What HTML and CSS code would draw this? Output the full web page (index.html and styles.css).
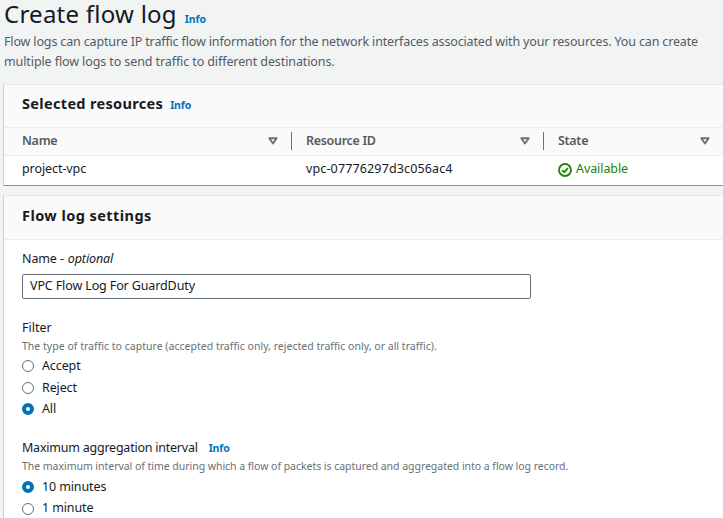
FILE: index.html
```html
<!DOCTYPE html>
<html lang="en">
<head>
<meta charset="utf-8">
<title>Create flow log</title>
<link rel="stylesheet" href="styles.css">
</head>
<body>
<header class="page-header">
  <div class="title-row"><h1>Create flow log</h1><a class="info">Info</a></div>
  <p><span class="intro-first">Flow logs can capture IP traffic flow information for the network interfaces associated with your resources. You can create</span><br><span class="intro-second">multiple flow logs to send traffic to different destinations.</span></p>
</header>
<section class="panel resources">
  <div class="panel-header"><h2>Selected resources</h2><a class="info">Info</a></div>
  <div class="row head">
    <div class="cell"><span>Name</span><svg class="sort" viewBox="0 0 10 8"><path d="M1.3 1.2h7.4L5 6.5z"/></svg></div>
    <div class="cell"><span class="id-head">Resource ID</span><svg class="sort" viewBox="0 0 10 8"><path d="M1.3 1.2h7.4L5 6.5z"/></svg></div>
    <div class="cell"><span>State</span><svg class="sort" viewBox="0 0 10 8"><path d="M1.3 1.2h7.4L5 6.5z"/></svg></div>
  </div>
  <div class="row data">
    <div class="cell"><span class="vpc-name">project-vpc</span></div>
    <div class="cell"><span class="vpc-id">vpc-07776297d3c056ac4</span></div>
    <div class="cell available"><svg class="check" viewBox="0 0 14 14"><circle cx="7" cy="7" r="6"/><path d="M4 7.2l2.2 2L10 5.2"/></svg><span>Available</span></div>
  </div>
</section>
<section class="panel settings">
  <div class="panel-header"><h2 class="settings-title">Flow log settings</h2></div>
  <form class="form">
    <label class="label name-label" for="name">Name - <em>optional</em></label>
    <input id="name" type="text" value="VPC Flow Log For GuardDuty">
    <div class="group filter">
      <div class="label"><span>Filter</span></div>
      <div class="hint filter-hint">The type of traffic to capture (accepted traffic only, rejected traffic only, or all traffic).</div>
      <label class="option"><i class="radio"></i><span>Accept</span></label>
      <label class="option"><i class="radio"></i><span>Reject</span></label>
      <label class="option"><i class="radio on"></i><span>All</span></label>
    </div>
    <div class="group interval">
      <div class="label"><span class="interval-label">Maximum aggregation interval</span><a class="info">Info</a></div>
      <div class="hint interval-hint">The maximum interval of time during which a flow of packets is captured and aggregated into a flow log record.</div>
      <label class="option"><i class="radio on"></i><span class="ten">10 minutes</span></label>
      <label class="option"><i class="radio"></i><span class="ten">1 minute</span></label>
    </div>
  </form>
</section>
</body>
</html>
```
FILE: styles.css
```css
* { box-sizing: border-box; }
body {
  margin: 0;
  height: 518px;
  overflow: hidden;
  background: #f2f3f3;
  color: #16191f;
  font: 12.5px/20px "Noto Sans", sans-serif;
  white-space: nowrap;
}
h1, h2, p { margin: 0; }
.page-header { height: 84px; padding-left: 4px; }
.title-row { display: flex; align-items: baseline; gap: 8px; height: 32px; }
h1 { font-size: 24px; line-height: 27px; font-weight: 400; letter-spacing: .25px; }
.info { color: #0073bb; font-size: 10.5px; font-weight: 700; letter-spacing: -.15px; }
.page-header p { color: #545b64; line-height: 20px; }
.intro-first { letter-spacing: -.15px; }
.intro-second { letter-spacing: -.1px; }
.panel {
  margin-left: 3px;
  border-left: 1px solid #ccd1d1;
  border-top: 1px solid #e6e9e9;
  background: #fff;
}
.panel-header {
  display: flex;
  align-items: baseline;
  gap: 7px;
  height: 43px;
  padding: 8px 18px 0;
  background: #fafafa;
  border-bottom: 1px solid #eaeded;
}
h2 { font-size: 14.5px; line-height: 20px; font-weight: 700; letter-spacing: .33px; }
.settings-title { letter-spacing: .44px; }
.resources { height: 102px; border-bottom: 1px solid #879596; }
.row { display: grid; grid-template-columns: 287px 252px 1fr; }
.head { height: 28px; background: #fafafa; border-bottom: 1px solid #eaeded; color: #545b64; font-weight: 600; letter-spacing: -.3px; }
.cell { display: flex; align-items: center; padding-left: 15px; }
.cell:first-child { padding-left: 18px; }
.head .cell { justify-content: space-between; padding-right: 13px; height: 18px; margin-top: 4px; }
.head .cell + .cell { border-left: 1px solid #687078; padding-left: 14px; }
.sort { width: 10px; height: 8px; fill: none; stroke: #687078; stroke-width: 1.9; stroke-linejoin: round; }
.data { height: 26px; }
.vpc-id { letter-spacing: .14px; }
.vpc-name { letter-spacing: -.08px; }
.available { color: #1d8102; gap: 4px; }
.check { width: 14px; height: 14px; margin-top: 2px; fill: none; stroke: #1d8102; stroke-width: 1.8; }
.available span { letter-spacing: -.08px; }
.settings { margin-top: 9px; height: 330px; }
.settings .panel-header { height: 44px; padding-top: 9px; }
.form { padding: 9px 18px 0; }
.label { display: flex; align-items: baseline; gap: 11px; height: 20px; }
.name-label { gap: 4px; letter-spacing: -.12px; }
input {
  display: block;
  width: 509px;
  height: 25px;
  margin-top: 5px;
  padding: 0 7px 2px;
  border: 1px solid #687078;
  border-radius: 2px;
  background: #fff;
  color: #16191f;
  font: inherit;
  letter-spacing: -.12px;
}
.filter { margin-top: 19px; }
.interval { margin-top: 18px; }
.interval .label { margin-top: -1px; margin-bottom: 1px; }
.interval-label { letter-spacing: -.23px; }
.hint { color: #687078; font-size: 10.5px; line-height: 16px; height: 18px; }
.filter-hint { letter-spacing: .018px; }
.interval-hint { height: 19px; letter-spacing: -.036px; margin-top: -1px; }
.option { display: flex; align-items: center; gap: 8px; height: 21.5px; letter-spacing: -.12px; }
.radio { width: 12px; height: 12px; border: 1px solid #687078; border-radius: 50%; background: #fff; }
.filter .radio { margin-top: -1px; }
.radio.on { border: 4px solid #0073bb; }
.option span { margin-top: -1px; }
```
